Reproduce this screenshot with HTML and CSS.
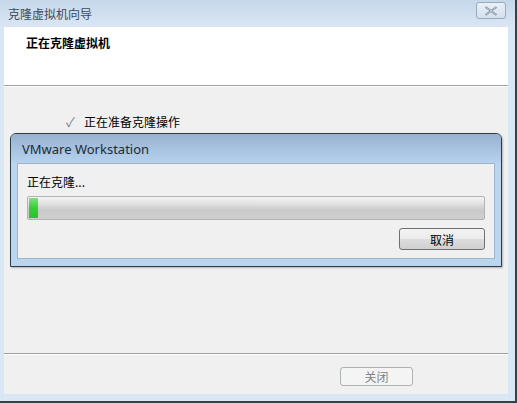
FILE: index.html
```html
<!DOCTYPE html>
<html lang="zh-CN">
<head>
    <meta charset="UTF-8">
    <title>克隆虚拟机向导</title>
    <link rel="stylesheet" href="styles.css">
</head>
<body>
    <div class="window">
        <div class="titlebar">
            <span class="title">克隆虚拟机向导</span>
            <button class="close-btn">
                <svg width="14" height="10" viewBox="0 0 14 10"><path d="M1.5 1 L12.5 9 M12.5 1 L1.5 9" stroke="#7d8998" stroke-width="2" fill="none"/><path d="M1.5 1 L12.5 9 M12.5 1 L1.5 9" stroke="#e8eef5" stroke-width="0.6" fill="none"/></svg>
            </button>
        </div>

        <div class="client">
            <div class="header">
                <h1>正在克隆虚拟机</h1>
            </div>

            <div class="body">
                <div class="step">
                    <span class="check">✓</span>
                    <span>正在准备克隆操作</span>
                </div>
            </div>

            <div class="footer">
                <button class="btn" disabled>关闭</button>
            </div>
        </div>

        <!-- 弹出的进度对话框 -->
        <div class="dialog">
            <div class="dialog-title">VMware Workstation</div>
            <div class="dialog-frame">
                <div class="dialog-body">
                    <div class="status">正在克隆...</div>
                    <div class="progress"><div class="progress-fill" style="width: 2%"></div></div>
                    <div class="dialog-actions">
                        <button class="btn btn-cancel">取消</button>
                    </div>
                </div>
            </div>
        </div>
    </div>
</body>
</html>
```

FILE: styles.css
```css
* { box-sizing: border-box; }
html, body { margin: 0; padding: 0; }
body { width: 517px; height: 403px; overflow: hidden; font-family: "Noto Sans CJK SC", "Noto Sans", sans-serif; font-size: 12px; color: #000; }

.window { position: relative; width: 517px; height: 403px; display: flex; flex-direction: column; background: #d9e6f4; border-right: 2px solid #3a3f45; border-bottom: 2px solid #3a3f45; }

.titlebar { height: 27px; flex: none; display: flex; align-items: center; justify-content: space-between; padding: 0 9px 0 8px; background: linear-gradient(#c6d7eb, #dae6f3); }
.title { color: #3b4a5c; font-size: 12px; line-height: 1; }
.close-btn { width: 30px; height: 17px; margin-top: -6px; padding: 0; display: flex; align-items: center; justify-content: center; border: 1px solid #9aa9ba; border-radius: 3px; background: linear-gradient(#e9f0f8, #d4e0ee); }

.client { flex: 1; display: flex; flex-direction: column; margin: 0 7px 7px 4px; background: #f0f0f0; }

.header { height: 59px; flex: none; background: #fff; border-bottom: 1px solid #a0a0a0; box-shadow: 0 1px 0 #fff; padding: 7px 0 0 22px; }
.header h1 { margin: 0; font-size: 12px; font-weight: bold; line-height: 18px; }

.body { flex: 1; padding: 28px 0 0 62px; }
.step { display: flex; align-items: center; gap: 9px; line-height: 16px; }
.check { color: #7a8590; font-size: 13px; }

.footer { height: 41px; flex: none; border-top: 1px solid #a0a0a0; box-shadow: inset 0 1px 0 #fff; display: flex; justify-content: flex-end; align-items: flex-start; padding: 13px 95px 0 0; }

.btn { height: 22px; padding: 0; font-family: inherit; font-size: 12px; border: 1px solid #707070; border-radius: 3px; background: linear-gradient(#f2f2f2 0%, #ebebeb 50%, #dddddd 51%, #cfcfcf 100%); color: #000; }
.footer .btn { width: 73px; height: 19px; line-height: 16px; border-color: #adb2b5; background: #f4f4f4; color: #838383; }

.dialog { position: absolute; left: 10px; top: 133px; width: 492px; height: 134px; display: flex; flex-direction: column; border: 1px solid #2c3d47; border-radius: 6px 6px 0 0; background: #bcd5ee; box-shadow: 1px 1px 2px rgba(0,0,0,0.25); }
.dialog-title { height: 29px; flex: none; padding: 0 0 0 11px; display: flex; align-items: center; font-family: "Noto Sans", sans-serif; font-size: 13px; color: #1e2a36; border-radius: 5px 5px 0 0; background: linear-gradient(#97b1cf, #b7d2ee); }
.dialog-frame { flex: 1; padding: 0 6px 7px 6px; }
.dialog-body { height: 100%; background: #f0f0f0; border: 1px solid #9cb5cf; padding: 10px 9px 0 9px; display: flex; flex-direction: column; }
.status { line-height: 16px; height: 22px; }
.progress { height: 24px; border: 1px solid #b2b2b2; border-radius: 2px; background: linear-gradient(#f3f3f3 0%, #e2e2e2 30%, #c9c9c9 60%, #cfcfcf 100%); padding: 1px; }
.progress-fill { height: 100%; background: linear-gradient(#7be27b, #35cf35 50%, #2fbf2f); }
.dialog-actions { display: flex; justify-content: flex-end; padding-top: 8px; }
.btn-cancel { width: 86px; }
```
